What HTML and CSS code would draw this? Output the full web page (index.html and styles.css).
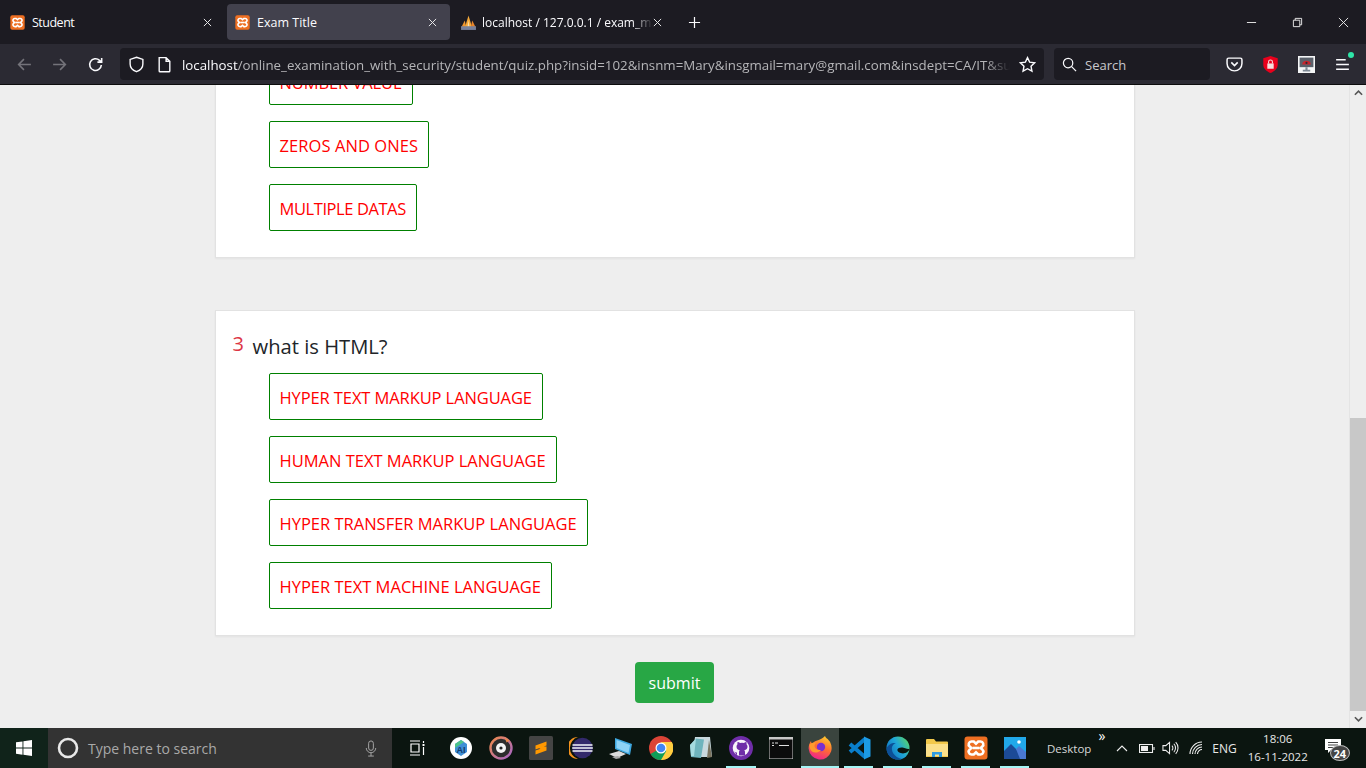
FILE: index.html
```html
<!DOCTYPE html>
<html lang="en">
<head>
<meta charset="utf-8">
<title>Exam Title</title>
<link rel="stylesheet" href="styles.css">
</head>
<body>
<svg class="defs" width="0" height="0" aria-hidden="true">
  <symbol id="xampp" viewBox="0 0 24 24">
    <rect x="0.5" y="0.5" width="23" height="23" rx="3" fill="#ee6f22"/>
    <path d="M7.500 5.500h2.300L12 7.600l2.200-2.100h2.300a2.900 2.900 0 0 1 1.800 5.100L16.700 12l1.600 1.400a2.900 2.900 0 0 1-1.800 5.100h-2.300L12 16.400l-2.200 2.100H7.500a2.900 2.900 0 0 1-1.800-5.100L7.300 12l-1.600-1.400A2.900 2.900 0 0 1 7.500 5.500z" fill="none" stroke="#fff" stroke-width="2.600"/>
    <path d="M8.500 12h7" stroke="#fff" stroke-width="2.600"/>
  </symbol>
</svg>

<header class="browser">
  <div class="tabbar">
    <div class="tab tab-student">
      <svg class="favicon" viewBox="0 0 24 24"><use href="#xampp"/></svg>
      <span class="tab-title">Student</span>
      <svg class="tab-close" viewBox="0 0 10 10"><path d="M1 1l8 8M9 1l-8 8"/></svg>
    </div>
    <div class="tab tab-active">
      <svg class="favicon" viewBox="0 0 24 24"><use href="#xampp"/></svg>
      <span class="tab-title">Exam Title</span>
      <svg class="tab-close" viewBox="0 0 10 10"><path d="M1 1l8 8M9 1l-8 8"/></svg>
    </div>
    <div class="tab tab-third">
      <svg class="favicon" viewBox="0 0 16 16">
        <path d="M1 13L4.500 6 6 13z" fill="#f0962e"/><path d="M4.500 13L8 1.500 11.500 13z" fill="#f5a93a"/><path d="M10 13l1.500-7L15 13z" fill="#e8842a"/><path d="M7 13l1-7 1 7z" fill="#fbe0a8"/><rect x="1" y="11.500" width="14" height="3.500" fill="#77809a"/>
      </svg>
      <span class="tab-title tab-fade">localhost / 127.0.0.1 / exam_management</span>
      <svg class="tab-close" viewBox="0 0 10 10"><path d="M1 1l8 8M9 1l-8 8"/></svg>
    </div>
    <svg class="newtab" viewBox="0 0 14 14"><path d="M7 1v12M1 7h12"/></svg>
    <div class="win-controls">
      <svg class="win-btn" viewBox="0 0 12 12"><path d="M1 6h10"/></svg>
      <svg class="win-btn" viewBox="0 0 12 12"><path d="M1.500 3.500h7v7h-7zM3.500 3.500v-2h7v7h-2"/></svg>
      <svg class="win-btn" viewBox="0 0 12 12"><path d="M1 1l10 10M11 1L1 11"/></svg>
    </div>
  </div>
  <div class="toolbar">
    <svg class="nav-ico nav-off" viewBox="0 0 16 16"><path d="M14 8H2.500M7.500 3l-5 5 5 5"/></svg>
    <svg class="nav-ico nav-off" viewBox="0 0 16 16"><path d="M2 8h11.500M8.500 3l5 5-5 5"/></svg>
    <svg class="nav-ico nav-reload" viewBox="0 0 16 16"><path d="M13.500 8.500a5.500 5.500 0 1 1-1.700-4.400L13.500 5.500M13.800 1.800v4h-4"/></svg>
    <div class="urlbar">
      <svg class="url-ico" viewBox="0 0 16 16"><path d="M8 1.200l6 2v4.300c0 3.500-2.500 6-6 7.300-3.500-1.300-6-3.800-6-7.300V3.200z"/></svg>
      <svg class="url-ico url-page" viewBox="0 0 16 16"><path d="M3 1.500h6.500l3.500 3.500v9a.8.8 0 0 1-.8.800H3.800A.8.800 0 0 1 3 14zM9.500 1.500V5H13"/></svg>
      <div class="url-text"><span class="url-host">localhost</span>/online_examination_with_security/student/quiz.php?insid=102&amp;insnm=Mary&amp;insgmail=mary@gmail.com&amp;insdept=CA/IT&amp;subject=quiz</div>
      <svg class="url-star" viewBox="0 0 16 16"><path d="M8 1.500l2 4.300 4.700.6-3.400 3.200.9 4.700L8 12l-4.200 2.300.9-4.700L1.300 6.400 6 5.800z"/></svg>
    </div>
    <div class="searchbar">
      <svg class="search-ico" viewBox="0 0 16 16"><circle cx="6.500" cy="6.500" r="5"/><path d="M10 10l5 5"/></svg>
      <span class="search-label">Search</span>
    </div>
    <div class="tool-icons">
      <svg class="tool-ico" viewBox="0 0 16 16"><path d="M2.500 2h11A1.500 1.500 0 0 1 15 3.500V7a7 7 0 0 1-14 0V3.500A1.500 1.500 0 0 1 2.500 2z" fill="none" stroke="#fbfbfe" stroke-width="1.400"/><path d="M5 6l3 3 3-3" fill="none" stroke="#fbfbfe" stroke-width="1.500"/></svg>
      <svg class="tool-ico" viewBox="0 0 16 16"><path d="M8 0l6.800 2.200v6c0 3.500-3.200 6.300-6.800 7.800-3.600-1.500-6.800-4.300-6.800-7.800v-6z" fill="#e8001c"/><rect x="5" y="7" width="6" height="5" fill="#f6dede"/><path d="M6.200 7V5.500a1.800 1.800 0 0 1 3.600 0V7" fill="none" stroke="#f6dede" stroke-width="1"/></svg>
      <svg class="tool-ico" viewBox="0 0 16 16"><rect width="16" height="16" fill="#f4f5f6"/><rect x="1.500" y="1.500" width="13" height="9" fill="#5a606a"/><path d="M4 8a4 3.500 0 0 1 8 0z" fill="#c8242c"/><circle cx="8" cy="6.500" r="1" fill="#2b2b33"/><path d="M7 10.500h2v2.500H7zM4.500 13h7v1.500h-7z" fill="#7d8894"/></svg>
      <div class="menu-wrap">
        <svg class="tool-ico" viewBox="0 0 16 16"><path d="M2 3.500h9M2 8h12M2 12.500h12" fill="none" stroke="#fbfbfe" stroke-width="1.500"/></svg>
        <span class="menu-dot"></span>
      </div>
    </div>
  </div>
</header>

<div class="viewport">
  <main class="page">
    <section class="card card-clipped">
      <div class="options">
        <button class="option option-snug" type="button">NUMBER VALUE</button>
        <button class="option option-wide" type="button">ZEROS AND ONES</button>
        <button class="option option-tight" type="button">MULTIPLE DATAS</button>
      </div>
    </section>
    <section class="card card-last">
      <div class="question"><span class="q-num">3</span><span class="q-text">what is HTML?</span></div>
      <div class="options">
        <button class="option option-snug" type="button">HYPER TEXT MARKUP LANGUAGE</button>
        <button class="option" type="button">HUMAN TEXT MARKUP LANGUAGE</button>
        <button class="option" type="button">HYPER TRANSFER MARKUP LANGUAGE</button>
        <button class="option" type="button">HYPER TEXT MACHINE LANGUAGE</button>
      </div>
    </section>
    <button class="submit" type="button">submit</button>
  </main>
  <div class="scrollbar">
    <svg class="sb-arrow" viewBox="0 0 10 6"><path d="M1 5l4-4 4 4"/></svg>
    <div class="sb-track"><div class="sb-thumb"></div></div>
    <svg class="sb-arrow" viewBox="0 0 10 6"><path d="M1 1l4 4 4-4"/></svg>
  </div>
</div>

<footer class="taskbar">
  <div class="start">
    <svg class="start-logo" viewBox="0 0 16 16"><path d="M0 2.300L6.500 1.400v6.200H0zM7.400 1.300L16 0v7.600H7.400zM0 8.500h6.500v6.200L0 13.800zM7.400 8.500H16V16l-8.600-1.200z" fill="#fff"/></svg>
  </div>
  <div class="tb-search">
    <svg class="cortana" viewBox="0 0 22 22"><circle cx="11" cy="11" r="9" fill="none" stroke="#e8e8e8" stroke-width="2.600"/></svg>
    <span class="tb-search-text">Type here to search</span>
    <svg class="mic" viewBox="0 0 12 18"><rect x="3.500" y="1" width="5" height="10" rx="2.500"/><path d="M1 8.500a5 5 0 0 0 10 0M6 13.500V17M3 17h6"/></svg>
  </div>
  <div class="taskview">
    <svg viewBox="0 0 16 16"><path d="M1 1h10M1 15h10M2 4h8v8H2zM14.500 1v2M14.500 7v8" fill="none" stroke="#fff" stroke-width="1.200"/><rect x="13.500" y="4" width="2" height="2" fill="#fff"/></svg>
  </div>
  <div class="apps">
    <div class="app"><svg viewBox="0 0 24 24"><circle cx="12" cy="12" r="11" fill="#fff"/><path d="M6 8l6-4 6 4v8l-6 4-6-4z" fill="#3e8fd6"/><path d="M6 8l6-4 3 2-9 6z" fill="#4cc38a"/><text class="ai-text" x="12" y="17" text-anchor="middle">AI</text></svg></div>
    <div class="app"><svg viewBox="0 0 24 24"><defs><linearGradient id="disc" x1="0" y1="0" x2="1" y2="1"><stop offset="0" stop-color="#f08a4b"/><stop offset="1" stop-color="#a565c8"/></linearGradient></defs><circle cx="12" cy="12" r="10.500" fill="#2d2d2d" stroke="url(#disc)" stroke-width="2.400"/><path d="M16 1.500l4.500 3-3 2z" fill="#f08a4b"/><circle cx="12" cy="12" r="5" fill="#f4f4f4"/><circle cx="12" cy="12" r="1.600" fill="#222"/></svg></div>
    <div class="app"><svg viewBox="0 0 24 24"><rect width="24" height="24" rx="1.500" fill="#444"/><path d="M6.500 9.500L17.500 5.500v4L6.500 13.500zM6.500 10.500L17.500 14v0L17.500 14.500 6.500 18.500v-4L11.500 12.800 6.500 11zM17.500 10.500v3.500l-11-3.500z" fill="#ff9800"/></svg></div>
    <div class="app"><svg viewBox="0 0 24 24"><path d="M9 1A11 11 0 0 0 9 23 11.500 11.500 0 0 1 9 1z" fill="#f7941e"/><circle cx="13.500" cy="12" r="10.300" fill="#33296b"/><path d="M3.500 9h20M3.200 12h20.600M3.500 15h20" stroke="#f4f4fa" stroke-width="1.400"/></svg></div>
    <div class="app"><svg viewBox="0 0 24 24"><path d="M6 2l17 6-2 11-15-6z" fill="#3ea8e0"/><path d="M7.500 4l13.500 5-1.500 8L7.500 12z" fill="#8ed2f5"/><path d="M0 18l10-3 7 3-9 4z" fill="#dcdcdc"/><path d="M3 21l6-1 3 2-5 1z" fill="#a8a8a8"/></svg></div>
    <div class="app"><svg viewBox="0 0 24 24"><circle cx="12" cy="12" r="12" fill="#db4437"/><path d="M12 12L1.600 18A12 12 0 0 0 12 24c1 0 2-.1 3-.4L20 12z" fill="#0f9d58"/><path d="M12 6h10.800A12 12 0 0 1 12 24l5.200-9z" fill="#ffcd40"/><circle cx="12" cy="12" r="5.500" fill="#fff"/><circle cx="12" cy="12" r="4.300" fill="#4285f4"/></svg></div>
    <div class="app"><svg viewBox="0 0 24 24"><path d="M6 1h15l2 20H3z" fill="#c9d9de"/><path d="M1 9L7 2.500l8 1L12 22l-10-1z" fill="#6fb4bd"/><path d="M1 9l6-6.500L5 20H2z" fill="#a6dbe0"/><path d="M20 4l3 17-5 1z" fill="#7a7460"/></svg></div>
    <div class="app app-line"><svg viewBox="0 0 24 24"><circle cx="12" cy="12" r="12" fill="#6f2da8"/><circle cx="12" cy="12" r="8.300" fill="#fff" opacity="0.950"/><path d="M8 19.500v-3c-2 .3-3-.7-3.300-1.700M16 19.500v-3.500c0-1-.3-1.400-.8-1.800 2.300-.3 3.300-1.500 3.300-3.600 0-1-.4-1.800-1-2.400.2-.7.1-1.500-.1-2.200-1 0-1.800.5-2.400 1a9 9 0 0 0-4 0c-.6-.5-1.400-1-2.400-1-.2.700-.3 1.500-.1 2.200-.6.600-1 1.400-1 2.400 0 2.100 1 3.300 3.300 3.600-.5.400-.8.900-.8 1.800v3.500h8z" fill="#6f2da8"/></svg></div>
    <div class="app app-cmd"><svg viewBox="0 0 24 22"><rect width="24" height="22" fill="#0c0c0c" stroke="#d0d0d0"/><rect width="24" height="2.500" fill="#c8c8c8"/><path d="M3 5.500h2v1H3zM6 5.500h3v1H6zM3 8h2v1H3zM10 8h10v1H10z" fill="#e0e0e0"/></svg></div>
    <div class="app app-active"><svg viewBox="0 0 24 24"><defs><linearGradient id="ffx" x1="0.800" y1="0" x2="0.400" y2="1"><stop offset="0" stop-color="#ffd02e"/><stop offset="0.500" stop-color="#ff6f30"/><stop offset="1" stop-color="#f0248a"/></linearGradient></defs><path d="M17 0c.6 2.200 3.800 3.200 5.300 6.500 1.500 3 1.700 6 .8 9A11.500 11.500 0 0 1 .7 13C.4 10 1.500 7 3 5c.2 1.300.5 2.400 1.200 3 .8-1.500 2.400-2.600 4.300-3.300 3-1 6-2 8.500-4.700z" fill="url(#ffx)"/><circle cx="13" cy="11" r="4.200" fill="#7a2fd0"/><path d="M1.500 8.500C3.500 6.500 6 6 8.300 6.800c-1.500 1-2.100 2.500-1.600 4 .9 2.500 3.600 3.700 6.300 3.100-1.800 2.500-6.500 3.500-9 1.500C2 14 1.300 11 1.500 8.500z" fill="#ff9a2e"/></svg></div>
    <div class="app app-line app-n"><svg viewBox="0 0 24 24"><path d="M18 3L3 16M18 21L3 8" fill="none" stroke="#0a7ecb" stroke-width="4"/><path d="M17 .5L23.500 3.500v17L17 23.500z" fill="#1c9be6"/></svg></div>
    <div class="app app-line app-n"><svg viewBox="0 0 24 24"><defs><linearGradient id="edg" x1="0" y1="0.800" x2="1" y2="0.200"><stop offset="0" stop-color="#0f6cbd"/><stop offset="0.550" stop-color="#1fa6d8"/><stop offset="1" stop-color="#58d36a"/></linearGradient></defs><circle cx="12" cy="12" r="11.500" fill="url(#edg)"/><path d="M.6 12.500C2 8.500 6 6.500 10 7c-3.500 1.500-4.500 4-4 7 .7 4.500 5 8 10 9-1.300.4-2.700.6-4 .6C5.500 23.600.3 18.500.6 12.500z" fill="#0c4f96"/><path d="M23.500 13c-.7 2.500-3.700 4.400-6.500 4.400-3 0-6-1.400-5.600-3.800.4-2 3.600-2.700 6.100-1.900 2.300.7 4.500 1.300 6 1.300z" fill="#0b1510"/></svg></div>
    <div class="app app-line app-n"><svg viewBox="0 0 24 24"><path d="M1 4a1 1 0 0 1 1-1h7l2 2.500h11a1 1 0 0 1 1 1V21H1z" fill="#f2c84b"/><path d="M1 8h22v12H1z" fill="#fbe08b"/><path d="M7 16h10v5h-3v-2.500h-4V21H7z" fill="#2f9be0"/></svg></div>
    <div class="app app-line app-n"><svg viewBox="0 0 24 24"><use href="#xampp"/></svg></div>
    <div class="app app-line app-n"><svg viewBox="0 0 24 24"><rect x="1" y="1" width="22" height="22" fill="#21a8ea"/><path d="M1 23v-8l7-7 9 9v6z" fill="#1c4a96"/><path d="M13 13l3-3 7 6v7h-6z" fill="#4a78d2"/><circle cx="16" cy="6" r="1.800" fill="#fff"/></svg></div>
  </div>
  <div class="tray">
    <span class="desktop">Desktop</span>
    <span class="chev">»</span>
    <svg class="tray-ico tray-up" viewBox="0 0 12 7"><path d="M1 6l5-5 5 5"/></svg>
    <svg class="tray-ico tray-bat" viewBox="0 0 16 9"><rect x=".5" y=".5" width="13" height="8"/><rect class="bat-fill" x="2" y="2" width="7" height="5"/><path d="M15 3v3"/></svg>
    <svg class="tray-ico tray-vol" viewBox="0 0 18 14"><path d="M1 4.500h3L8 1v12L4 9.500H1zM10.500 4.500a3.500 3.500 0 0 1 0 5M12.500 2.500a6.500 6.500 0 0 1 0 9M14.500 .8a9 9 0 0 1 0 12.400"/></svg>
    <svg class="tray-ico tray-wifi" viewBox="0 0 14 14"><path d="M1 13A12 12 0 0 1 13 1M3.500 13A9.500 9.500 0 0 1 13 3.500M6 13A7 7 0 0 1 13 6M8.500 13A4.500 4.500 0 0 1 13 8.500"/></svg>
    <span class="lang">ENG</span>
    <div class="clock"><span>18:06</span><span>16-11-2022</span></div>
    <div class="notif">
      <svg class="notif-ico" viewBox="0 0 16 14"><path d="M0 0h16v11H6l-3 3v-3H0z" fill="#fff"/><path d="M3 3.500h10M3 6h10M3 8.500h7" stroke="#111" stroke-width="0.800"/></svg>
      <span class="notif-badge">24</span>
    </div>
  </div>
</footer>
</body>
</html>
```

FILE: styles.css
```css
* { box-sizing: border-box; }
html, body { margin: 0; height: 100%; overflow: hidden; }
body {
  display: flex;
  flex-direction: column;
  height: 768px;
  font-family: "Open Sans", "Noto Sans", "Liberation Sans", sans-serif;
  background: #eee;
}
.defs { position: absolute; }
svg { display: block; flex: none; }

/* browser chrome */
.browser { flex: none; height: 85px; background: #1c1b22; border-bottom: 1px solid #0c0c0d; }
.tabbar { display: flex; align-items: center; height: 44px; padding-left: 2px; color: #fbfbfe; }
.tab {
  display: flex; align-items: center;
  width: 223px; height: 36px;
  padding: 0 10px 0 8px;
  font-size: 12.500px; border-radius: 4px;
  margin-right: 2px;
}
.tab-student .tab-title { letter-spacing: -.5px; }
.tab-active { background: #42414d; }
.favicon { width: 15px; height: 15px; margin-right: 7px; }
.tab-third { font-size: 12px; }
.tab-third .favicon { width: 17px; height: 17px; margin-right: 5px; }
.tab-title { flex: 1; white-space: nowrap; overflow: hidden; min-width: 0; }
.tab-fade { -webkit-mask-image: linear-gradient(90deg, #000 88%, transparent); mask-image: linear-gradient(90deg, #000 88%, transparent); }
.tab-close { width: 9px; height: 9px; margin: 0 3px 0 6px; fill: none; stroke: #e8e8ea; stroke-width: 1.100; }
.tab-third .tab-close { margin-left: 0; }
.newtab { width: 13px; height: 13px; margin-left: 11px; fill: none; stroke: #fbfbfe; stroke-width: 1.300; }
.win-controls { margin-left: auto; display: flex; align-items: center; gap: 35px; padding-right: 17px; }
.win-btn { width: 11px; height: 11px; fill: none; stroke: #f0f0f0; stroke-width: 1; }

.toolbar { display: flex; align-items: center; height: 40px; background: #2b2a33; padding-left: 16px; }
.nav-ico { width: 17px; height: 17px; margin-right: 18px; fill: none; stroke: #fbfbfe; stroke-width: 1.500; }
.nav-off { opacity: .35; }
.nav-reload { margin-left: 1px; margin-right: 16px; }
.urlbar {
  display: flex; align-items: center; width: 924px; height: 32px;
  background: #1c1b22; border-radius: 4px; padding: 0 8px;
}
.url-ico { width: 17px; height: 17px; fill: none; stroke: #fbfbfe; stroke-width: 1.300; margin-right: 5px; }
.url-page { margin: 0 9px 0 6px; }
.url-text {
  flex: 1; min-width: 0; overflow: hidden; white-space: nowrap;
  font-size: 13.300px; line-height: 20px; padding-top: 1px; color: #b5b5b8;
  -webkit-mask-image: linear-gradient(90deg, #000 97%, transparent); mask-image: linear-gradient(90deg, #000 97%, transparent);
}
.url-host { color: #fbfbfe; }
.url-star { width: 17px; height: 17px; margin-left: 9px; fill: none; stroke: #fbfbfe; stroke-width: 1.300; }
.searchbar {
  display: flex; align-items: center; gap: 8px; width: 156px; height: 32px; margin-left: 10px; padding-left: 8px;
  background: #1c1b22; border-radius: 4px; color: #c8c8cc; font-size: 13px;
}
.search-label { padding-top: 1px; }
.search-ico { width: 15px; height: 15px; fill: none; stroke: #fbfbfe; stroke-width: 1.300; }
.tool-icons { display: flex; align-items: center; gap: 19px; margin-left: 16px; }
.tool-ico { width: 17px; height: 17px; }
.menu-wrap { position: relative; }
.menu-dot { position: absolute; top: -4px; right: -3px; width: 6px; height: 6px; border-radius: 50%; background: #2ee6a8; }

/* page */
.viewport { flex: 1; min-height: 0; display: flex; background: #eee; }
.page {
  flex: 1; min-width: 0; overflow: hidden;
  display: flex; flex-direction: column; align-items: center; justify-content: flex-end;
  padding-bottom: 25px;
}
.card {
  flex: none; width: 920px; background: #fff;
  border: 1px solid #e2e2e2; box-shadow: 0 1px 2px rgba(0,0,0,.05);
  padding: 16px 16px 26px 53px;
}
.card-clipped { padding-top: 60px; margin-bottom: 52px; }
.card-last { margin-bottom: 26px; padding-top: 17px; }
.question { display: flex; align-items: center; margin: 0 0 9px -36px; height: 36px; }
.q-num { color: #dc3545; font-size: 20px; width: 20px; margin-top: -6px; }
.q-text { color: #212529; font-size: 20.200px; }
.options { display: flex; flex-direction: column; align-items: flex-start; gap: 16px; }
.option {
  height: 47px; padding: 1px 10px 0;
  background: #fff; border: 1px solid #008000; border-radius: 2px;
  color: #f00; font: inherit; font-size: 16.500px; white-space: nowrap;
}
.option-tight { letter-spacing: -.42px; }
.option-snug { letter-spacing: -.1px; }
.option-wide { letter-spacing: .07px; }
.submit {
  flex: none; width: 79px; height: 41px; background: #28a745; color: #fff;
  border: 0; border-radius: 4px; font: inherit; font-size: 16px;
}
.scrollbar { flex: none; width: 17px; display: flex; flex-direction: column; background: #eee; border-left: 1px solid #e4e4e4; }
.sb-arrow { width: 9px; height: 6px; margin: 5px auto 6px; fill: none; stroke: #555; stroke-width: 1.800; }
.sb-track { flex: 1; display: flex; flex-direction: column; justify-content: flex-end; }
.sb-thumb { height: 293px; background: #c8c8c8; }

/* taskbar */
.taskbar { flex: none; display: flex; align-items: stretch; height: 40px; background: #0b1510; color: #e8e8e8; }
.start { width: 48px; display: flex; align-items: center; justify-content: center; background: #10231a; }
.start-logo { width: 16px; height: 16px; }
.tb-search { width: 344px; display: flex; align-items: center; padding: 0 15px 0 9px; background: #333; }
.cortana { width: 22px; height: 22px; margin-right: 9px; }
.tb-search-text { flex: 1; color: #a9a9a9; font-size: 14px; }
.mic { width: 12px; height: 17px; fill: none; stroke: #aaa; stroke-width: 1; }
.taskview { width: 49px; display: flex; align-items: center; justify-content: center; }
.taskview svg { width: 16px; height: 16px; }
.apps { display: flex; }
.app { width: 40px; display: flex; align-items: center; justify-content: center; position: relative; }
.app svg { width: 24px; height: 24px; }
.app-n { width: 39px; }
.app-line::after,
.app-active::after {
  content: ""; position: absolute; left: 5px; right: 5px; bottom: 0; height: 2px; background: #a5f5f5;
}
.app-active { width: 38px; background: #3a443e; }
.app-active::after { left: 0; right: 0; }
.app-cmd svg { height: 22px; }
.ai-text { font: bold 9px "Liberation Sans", sans-serif; fill: #123a6b; }
.tray { flex: 1; display: flex; align-items: center; min-width: 0; font-size: 12px; }
.desktop { margin-left: 13px; color: #d8d8d8; font-size: 11.500px; }
.chev { align-self: flex-start; margin: 0 0 0 7px; color: #fff; font-size: 14px; line-height: 16px; }
.tray-ico { fill: none; stroke: #eee; stroke-width: 1.100; }
.tray-up { width: 12px; height: 7px; margin-left: 11px; }
.tray-bat { width: 16px; height: 9px; margin-left: 11px; }
.bat-fill { fill: #eee; stroke: none; }
.tray-vol { width: 17px; height: 14px; margin-left: 7px; }
.tray-wifi { width: 14px; height: 14px; margin-left: 10px; }
.lang { margin-left: 9px; color: #e8e8e8; }
.clock { display: flex; flex-direction: column; align-items: center; width: 62px; margin-left: 10px; line-height: 18px; font-size: 11.500px; }
.notif { position: relative; margin-left: 16px; width: 28px; height: 30px; }
.notif-ico { width: 16px; height: 14px; margin-top: 6px; }
.notif-badge {
  position: absolute; left: 5px; top: 12px; width: 20px; height: 16px; border-radius: 50%;
  background: #444; border: 1px solid #bbb; color: #fff; font-size: 11px; font-weight: 700;
  display: flex; align-items: center; justify-content: center;
}
```
